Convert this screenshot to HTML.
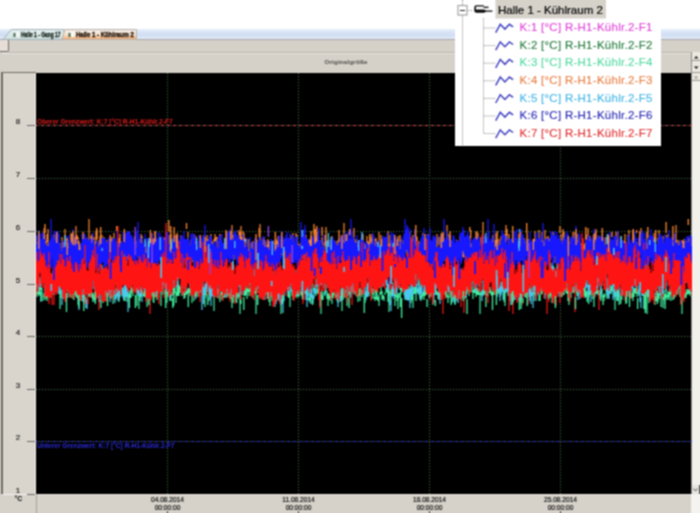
<!DOCTYPE html>
<html><head><meta charset="utf-8">
<style>
*{margin:0;padding:0;box-sizing:border-box}
html,body{width:700px;height:513px;overflow:hidden;background:#fff;font-family:"Liberation Sans",sans-serif}
.a{position:absolute}
#tabstrip{left:0;top:29px;width:700px;height:11px;background:linear-gradient(#e6eefa 0%,#d0def4 55%,#d6e2f4 80%,#e8eef8 100%);border-bottom:1px solid #a4a6aa}
#gray{left:0;top:40px;width:700px;height:473px;background:#d5d1c9}
#brk{left:0;top:40px;width:9px;height:12px;border-right:1px solid #6c6a66;border-bottom:1px solid #6c6a66;border-bottom-right-radius:2px;background:#e6ded6}
#hline{left:9px;top:52px;width:682px;height:1px;background:#b9b5ad}
#hline2{left:2px;top:53px;width:689px;height:1px;background:#e6e3dd}
#title{left:0;top:58px;width:692px;padding-left:0;text-align:center;font-size:6.2px;font-weight:bold;color:#5a5854;-webkit-text-stroke:0.1px currentColor;letter-spacing:0.2px}
#lborder{left:1px;top:72px;width:2px;height:422px;background:#6e6b66}
#ltop{left:1px;top:72px;width:35px;height:1px;background:#6e6b66}
#leftax{left:3px;top:73px;width:33px;height:421px;background:#d9d5cd}
#lhl{left:35px;top:73px;width:1px;height:421px;background:#f2f0ec}
#plot{left:36px;top:73px;width:656px;height:421px;background:#000}
#rscroll{left:691px;top:52px;width:9px;height:442px;background:#f1f0eb;border-left:1px solid #8e8c88}
.sb{position:absolute;left:692px;width:8px;background:#ebe8e0;border-bottom:1px solid #9c9a95}
#bottom{left:0;top:494px;width:700px;height:19px;background:#d6d2ca}
#bhl{left:3px;top:494px;width:33px;height:1px;background:#f4f2ee}
#bsep{left:36px;top:494px;width:1px;height:19px;background:#a4a19a}
#rbot{left:691px;top:494px;width:9px;height:19px;background:#f4f3ef}
.yl{position:absolute;left:13px;font-size:8px;color:#1a1a1a;-webkit-text-stroke:0.15px currentColor;width:10px;text-align:center;line-height:8px}
.tk{position:absolute;left:27px;width:8px;height:1px;background:#6a6a6a}
.xl{position:absolute;font-size:6.6px;color:#080808;-webkit-text-stroke:0.15px currentColor;width:60px;text-align:center;line-height:8px}
.xt{position:absolute;width:1px;height:2px;top:511px;background:#444}
#legend{left:455px;top:0;width:206px;height:146px;background:#fff}
.lt{position:absolute;left:64.5px;font-size:11.5px;letter-spacing:0.27px;white-space:nowrap;line-height:12px;-webkit-text-stroke:0.12px currentColor}
</style></head><body><svg width="0" height="0" style="position:absolute"><filter id="soft" x="0" y="0" width="100%" height="100%" color-interpolation-filters="sRGB"><feConvolveMatrix order="3" kernelMatrix="1 2 1 2 4 2 1 2 1" divisor="16" edgeMode="duplicate"/></filter></svg><div style="position:absolute;left:0;top:0;width:700px;height:513px;filter:url(#soft)">
<div class="a" id="tabstrip"></div>
<div class="a" id="gray"></div>
<div class="a" id="brk"></div>
<svg class="a" style="left:0;top:29px" width="140" height="12"><defs><linearGradient id="tg" x1="0" y1="0" x2="0" y2="1"><stop offset="0" stop-color="#f4f0ec"/><stop offset="0.5" stop-color="#f8e4d2"/><stop offset="1" stop-color="#f0a870"/></linearGradient><linearGradient id="tg1" x1="0" y1="0" x2="0" y2="1"><stop offset="0" stop-color="#e8f0f0"/><stop offset="1" stop-color="#cfe0dc"/></linearGradient></defs><path d="M3 10.5 L11.5 0.5 H64 V10.5 Z" fill="url(#tg1)" stroke="#9fb0b8" stroke-width="1"/><path d="M62 10.5 L65 0.5 H136.5 V10.5 Z" fill="url(#tg)" stroke="#b8b0a8" stroke-width="1"/><rect x="13.5" y="4" width="2" height="4" fill="#4a6a58"/><rect x="16" y="3" width="3" height="5" fill="#f4f8f6"/><rect x="68.5" y="4" width="2" height="4" fill="#3a6a48"/><rect x="71" y="3" width="3" height="5" fill="#f8faf8"/></svg>
<div class="a" style="left:21px;top:30.5px;font-size:7px;font-weight:bold;color:#0c1a14;white-space:nowrap;transform:scaleX(0.70);-webkit-text-stroke:0.3px currentColor;transform-origin:0 0">Halle 1 - Gang 17</div>
<div class="a" style="left:76px;top:30.5px;font-size:7px;font-weight:bold;color:#1a0c00;white-space:nowrap;transform:scaleX(0.86);-webkit-text-stroke:0.35px currentColor;transform-origin:0 0">Halle 1 - Kühlraum 2</div>
<div class="a" id="hline"></div>
<div class="a" id="hline2"></div>
<div class="a" id="title">Originalgröße</div>
<div class="a" id="lborder"></div>
<div class="a" id="leftax"></div>
<div class="a" id="ltop"></div>
<div class="a" id="lhl"></div>
<div class="a" id="plot"></div>
<div class="a" id="rscroll"></div>
<div class="sb" style="top:52px;height:9px"></div>
<div class="sb" style="top:61px;height:12px"></div>
<div class="sb" style="top:73px;height:8px"></div>
<svg class="a" style="left:692px;top:52px" width="8" height="30"><path d="M2 6.5h4.5l-2.25-2.5z" fill="#111"/><path d="M2 14.5h4.5l-2.25 2.5z" fill="#111"/><rect x="2.5" y="24" width="3" height="3" fill="#b8b4ac"/></svg>
<div class="a" id="bottom"></div>
<div class="a" id="bhl"></div>
<div class="a" style="left:36px;top:494px;width:655px;height:1px;background:#e6e3dd"></div>
<div class="a" id="bsep"></div>
<div class="a" id="rbot"></div>
<div class="a" style="left:699px;top:485px;width:1px;height:9px;background:#555"></div>
<div class="a" style="left:692px;top:485px;width:7px;height:9px;background:#e6e4de"></div>
<svg class="a" style="left:692px;top:485px" width="8" height="9"><path d="M1.5 3.5 L3.5 6 L5.5 3.5" fill="none" stroke="#555" stroke-width="1"/></svg>
<div class="tk" style="top:125px"></div>
<div class="yl" style="top:118px">8</div>
<div class="tk" style="top:178px"></div>
<div class="yl" style="top:171px">7</div>
<div class="tk" style="top:231px"></div>
<div class="yl" style="top:224px">6</div>
<div class="tk" style="top:284px"></div>
<div class="yl" style="top:277px">5</div>
<div class="tk" style="top:336px"></div>
<div class="yl" style="top:329px">4</div>
<div class="tk" style="top:389px"></div>
<div class="yl" style="top:382px">3</div>
<div class="tk" style="top:441px"></div>
<div class="yl" style="top:434px">2</div>
<div class="tk" style="top:494px"></div>
<div class="yl" style="top:487px">1</div>
<div class="a" style="left:14.5px;top:494.5px;font-size:6.8px;font-weight:bold;color:#000">°C</div>
<div class="xl" style="left:137.5px;top:495.5px">04.08.2014<br>00:00:00</div>
<div class="xt" style="left:167px"></div>
<div class="xl" style="left:268.5px;top:495.5px">11.08.2014<br>00:00:00</div>
<div class="xt" style="left:298px"></div>
<div class="xl" style="left:399.5px;top:495.5px">18.08.2014<br>00:00:00</div>
<div class="xt" style="left:429px"></div>
<div class="xl" style="left:530.5px;top:495.5px">25.08.2014<br>00:00:00</div>
<div class="xt" style="left:560px"></div>
<svg class="a" style="left:0;top:0" width="700" height="513" viewBox="0 0 700 513"><defs><clipPath id="c"><rect x="36" y="73" width="656" height="421"/></clipPath></defs><g clip-path="url(#c)" fill="none"><g>
<line x1="36" y1="125.5" x2="692" y2="125.5" stroke="#4a784a" stroke-dasharray="1 2"/>
<line x1="36" y1="178.5" x2="692" y2="178.5" stroke="#4a784a" stroke-dasharray="1 2"/>
<line x1="36" y1="231.5" x2="692" y2="231.5" stroke="#4a784a" stroke-dasharray="1 2"/>
<line x1="36" y1="284.5" x2="692" y2="284.5" stroke="#4a784a" stroke-dasharray="1 2"/>
<line x1="36" y1="336.5" x2="692" y2="336.5" stroke="#4a784a" stroke-dasharray="1 2"/>
<line x1="36" y1="389.5" x2="692" y2="389.5" stroke="#4a784a" stroke-dasharray="1 2"/>
<line x1="36" y1="441.5" x2="692" y2="441.5" stroke="#4a784a" stroke-dasharray="1 2"/>
<line x1="167.5" y1="73" x2="167.5" y2="494" stroke="#4a784a" stroke-dasharray="1 2"/>
<line x1="298.5" y1="73" x2="298.5" y2="494" stroke="#4a784a" stroke-dasharray="1 2"/>
<line x1="429.5" y1="73" x2="429.5" y2="494" stroke="#4a784a" stroke-dasharray="1 2"/>
<line x1="560.5" y1="73" x2="560.5" y2="494" stroke="#4a784a" stroke-dasharray="1 2"/>
<line x1="36" y1="125.5" x2="692" y2="125.5" stroke="#e04a5a" stroke-dasharray="3 3" stroke-dashoffset="1"/>
<line x1="36" y1="441.5" x2="692" y2="441.5" stroke="#3434d0" stroke-dasharray="3 3" stroke-dashoffset="1"/>
<text x="37" y="124" font-size="6.6" font-weight="bold" fill="#e01c1c" font-family="Liberation Sans">Oberer Grenzwert: K:7 [°C] R-H1-Kühlr.2-F7</text>
<text x="37" y="447.5" font-size="6.6" font-weight="bold" fill="#2a2ad8" font-family="Liberation Sans">Unterer Grenzwert: K:7 [°C] R-H1-Kühlr.2-F7</text>
<path stroke="#40f0a0" stroke-width="1.2" d="M36.0 285V295M37.0 292V297M38.0 270V294M39.0 285V296M40.0 281V295M41.0 287V290M42.0 288V296M43.0 296V301M44.0 293V297M45.0 286V300M46.0 290V298M47.0 291V301M48.0 292V298M49.0 288V292M50.0 289V296M51.0 291V298M52.0 284V295M53.0 286V292M54.0 282V290M55.0 283V290M56.0 281V287M57.0 284V292M58.0 285V291M59.0 290V294M60.0 289V309M61.0 290V298M62.0 283V287M63.0 286V299M64.0 287V292M65.0 288V297M66.0 287V290M67.0 284V291M68.0 284V292M69.0 284V292M70.0 292V297M71.0 285V298M72.0 288V295M73.0 291V299M74.0 293V300M75.0 291V295M76.0 289V297M77.0 289V298M78.0 286V305M79.0 286V295M80.0 294V297M81.0 289V294M82.0 290V301M83.0 293V297M84.0 287V295M85.0 296V303M86.0 297V302M87.0 291V295M88.0 289V297M89.0 290V296M90.0 292V297M91.0 292V298M92.0 292V297M93.0 293V299M94.0 295V300M95.0 287V302M96.0 292V297M97.0 289V293M98.0 291V295M99.0 285V295M100.0 288V293M101.0 281V292M102.0 265V300M103.0 291V303M104.0 286V298M105.0 289V296M106.0 290V301M107.0 283V289M108.0 285V292M109.0 287V291M110.0 285V298M111.0 294V298M112.0 288V298M113.0 286V304M114.0 280V296M115.0 294V300M116.0 288V299M117.0 289V295M118.0 290V297M119.0 286V302M120.0 287V297M121.0 287V289M122.0 288V295M123.0 288V296M124.0 291V301M125.0 292V301M126.0 294V297M127.0 291V302M128.0 291V297M129.0 294V298M130.0 290V298M131.0 283V298M132.0 287V293M133.0 289V296M134.0 285V291M135.0 282V286M136.0 285V291M137.0 264V306M138.0 289V293M139.0 293V309M140.0 292V301M141.0 287V297M142.0 289V294M143.0 292V296M144.0 291V297M145.0 289V297M146.0 291V298M147.0 293V307M148.0 285V297M149.0 290V294M150.0 290V296M151.0 290V295M152.0 288V297M153.0 287V292M154.0 291V296M155.0 293V297M156.0 292V297M157.0 291V300M158.0 286V293M159.0 274V292M160.0 284V289M161.0 286V306M162.0 285V289M163.0 288V295M164.0 276V287M165.0 290V294M166.0 285V293M167.0 290V303M168.0 291V297M169.0 287V293M170.0 288V301M171.0 294V301M172.0 292V296M173.0 285V295M174.0 288V295M175.0 285V293M176.0 292V303M177.0 285V296M178.0 281V296M179.0 285V296M180.0 286V293M181.0 287V290M182.0 292V296M183.0 292V295M184.0 291V299M185.0 292V298M186.0 290V295M187.0 290V294M188.0 288V295M189.0 288V293M190.0 279V296M191.0 289V294M192.0 287V303M193.0 282V292M194.0 293V301M195.0 280V296M196.0 285V297M197.0 288V293M198.0 289V297M199.0 287V294M200.0 289V292M201.0 283V293M202.0 285V289M203.0 290V296M204.0 288V295M205.0 290V307M206.0 285V295M207.0 294V298M208.0 288V292M209.0 289V301M210.0 274V295M211.0 285V292M212.0 291V295M213.0 289V294M214.0 290V311M215.0 289V295M216.0 287V295M217.0 288V298M218.0 289V294M219.0 288V299M220.0 274V302M221.0 291V295M222.0 292V300M223.0 290V298M224.0 293V298M225.0 290V297M226.0 286V292M227.0 289V297M228.0 286V296M229.0 292V297M230.0 287V299M231.0 292V299M232.0 292V308M233.0 295V303M234.0 291V297M235.0 296V302M236.0 289V294M237.0 293V298M238.0 292V297M239.0 292V299M240.0 299V314M241.0 297V304M242.0 291V295M243.0 247V290M244.0 291V296M245.0 288V296M246.0 285V295M247.0 288V299M248.0 287V292M249.0 282V296M250.0 288V292M251.0 275V295M252.0 290V294M253.0 290V298M254.0 286V293M255.0 282V294M256.0 288V314M257.0 287V293M258.0 285V289M259.0 290V293M260.0 291V297M261.0 289V297M262.0 288V292M263.0 282V300M264.0 288V292M265.0 286V291M266.0 290V294M267.0 287V292M268.0 289V296M269.0 290V302M270.0 294V306M271.0 288V297M272.0 293V301M273.0 291V294M274.0 286V299M275.0 288V292M276.0 277V292M277.0 292V301M278.0 287V298M279.0 291V298M280.0 270V302M281.0 294V314M282.0 292V296M283.0 285V293M284.0 287V290M285.0 283V288M286.0 281V284M287.0 280V288M288.0 291V297M289.0 291V298M290.0 290V307M291.0 287V291M292.0 290V296M293.0 290V300M294.0 286V296M295.0 289V297M296.0 291V296M297.0 291V298M298.0 290V296M299.0 293V297M300.0 289V294M301.0 292V295M302.0 286V296M303.0 287V300M304.0 288V293M305.0 288V294M306.0 289V294M307.0 287V295M308.0 292V300M309.0 298V301M310.0 290V301M311.0 291V304M312.0 295V298M313.0 284V289M314.0 288V292M315.0 288V294M316.0 292V296M317.0 289V293M318.0 276V294M319.0 288V294M320.0 294V306M321.0 292V314M322.0 290V299M323.0 295V300M324.0 292V295M325.0 290V294M326.0 284V292M327.0 291V299M328.0 293V306M329.0 294V299M330.0 295V301M331.0 293V298M332.0 293V304M333.0 292V298M334.0 291V295M335.0 294V297M336.0 283V298M337.0 294V301M338.0 289V303M339.0 292V297M340.0 290V297M341.0 290V298M342.0 292V311M343.0 292V300M344.0 291V297M345.0 287V298M346.0 290V293M347.0 293V306M348.0 284V296M349.0 291V294M350.0 290V298M351.0 288V292M352.0 286V292M353.0 285V292M354.0 288V293M355.0 291V295M356.0 283V293M357.0 292V297M358.0 294V302M359.0 289V296M360.0 288V301M361.0 288V295M362.0 290V297M363.0 289V294M364.0 290V295M365.0 294V303M366.0 293V297M367.0 287V296M368.0 289V294M369.0 292V296M370.0 287V291M371.0 286V290M372.0 288V299M373.0 289V294M374.0 280V299M375.0 297V301M376.0 270V299M377.0 292V300M378.0 297V301M379.0 295V306M380.0 292V295M381.0 284V294M382.0 291V300M383.0 295V299M384.0 296V301M385.0 292V295M386.0 288V292M387.0 288V293M388.0 290V302M389.0 290V312M390.0 291V295M391.0 291V302M392.0 289V294M393.0 290V295M394.0 288V295M395.0 291V306M396.0 286V297M397.0 295V301M398.0 293V309M399.0 293V298M400.0 286V290M401.0 288V294M402.0 283V292M403.0 281V288M404.0 285V295M405.0 293V300M406.0 290V294M407.0 284V292M408.0 286V290M409.0 286V294M410.0 290V295M411.0 294V303M412.0 294V300M413.0 292V308M414.0 286V294M415.0 287V294M416.0 287V301M417.0 289V292M418.0 288V294M419.0 278V293M420.0 291V298M421.0 295V301M422.0 293V299M423.0 292V296M424.0 290V300M425.0 289V296M426.0 289V295M427.0 281V294M428.0 273V290M429.0 284V298M430.0 290V297M431.0 290V297M432.0 288V294M433.0 291V305M434.0 285V293M435.0 288V292M436.0 286V295M437.0 291V295M438.0 292V299M439.0 288V300M440.0 292V296M441.0 286V293M442.0 284V292M443.0 288V295M444.0 287V294M445.0 283V292M446.0 288V298M447.0 294V297M448.0 296V303M449.0 293V298M450.0 279V293M451.0 285V296M452.0 297V303M453.0 292V297M454.0 295V300M455.0 285V303M456.0 289V295M457.0 289V293M458.0 284V290M459.0 290V296M460.0 287V293M461.0 289V300M462.0 292V298M463.0 289V294M464.0 282V293M465.0 289V299M466.0 285V298M467.0 286V294M468.0 287V291M469.0 286V296M470.0 286V292M471.0 282V289M472.0 287V292M473.0 290V299M474.0 287V293M475.0 288V293M476.0 288V297M477.0 288V295M478.0 288V295M479.0 289V295M480.0 293V314M481.0 291V295M482.0 291V296M483.0 289V296M484.0 285V294M485.0 291V295M486.0 289V296M487.0 293V297M488.0 290V296M489.0 287V293M490.0 287V293M491.0 290V295M492.0 292V296M493.0 288V295M494.0 292V295M495.0 284V292M496.0 291V295M497.0 289V292M498.0 284V291M499.0 286V292M500.0 290V297M501.0 288V293M502.0 285V290M503.0 277V292M504.0 276V299M505.0 286V306M506.0 286V293M507.0 286V291M508.0 283V296M509.0 286V295M510.0 290V297M511.0 286V292M512.0 284V288M513.0 281V289M514.0 288V295M515.0 289V297M516.0 293V297M517.0 292V296M518.0 287V298M519.0 290V296M520.0 297V303M521.0 290V297M522.0 285V291M523.0 288V291M524.0 279V295M525.0 289V297M526.0 291V298M527.0 286V294M528.0 287V291M529.0 285V293M530.0 289V297M531.0 284V289M532.0 266V293M533.0 269V293M534.0 292V301M535.0 291V295M536.0 284V296M537.0 286V290M538.0 286V290M539.0 289V301M540.0 295V301M541.0 289V295M542.0 288V294M543.0 282V289M544.0 284V292M545.0 288V295M546.0 289V294M547.0 289V293M548.0 287V291M549.0 289V293M550.0 289V296M551.0 292V298M552.0 294V303M553.0 291V296M554.0 289V293M555.0 293V296M556.0 287V291M557.0 285V294M558.0 289V294M559.0 287V293M560.0 290V295M561.0 288V297M562.0 289V297M563.0 282V295M564.0 282V295M565.0 288V291M566.0 287V293M567.0 271V294M568.0 288V301M569.0 289V305M570.0 287V294M571.0 284V298M572.0 288V292M573.0 286V293M574.0 290V293M575.0 285V291M576.0 286V293M577.0 285V296M578.0 290V296M579.0 284V293M580.0 286V294M581.0 287V291M582.0 286V294M583.0 286V291M584.0 287V296M585.0 287V298M586.0 290V297M587.0 292V302M588.0 291V294M589.0 285V297M590.0 291V295M591.0 282V294M592.0 290V295M593.0 274V299M594.0 290V307M595.0 291V297M596.0 288V294M597.0 278V294M598.0 290V295M599.0 290V296M600.0 291V299M601.0 287V301M602.0 289V294M603.0 295V298M604.0 295V301M605.0 293V297M606.0 288V292M607.0 288V299M608.0 288V296M609.0 280V290M610.0 289V294M611.0 286V294M612.0 284V291M613.0 287V292M614.0 291V297M615.0 287V310M616.0 290V296M617.0 295V301M618.0 298V301M619.0 295V305M620.0 292V296M621.0 288V291M622.0 288V300M623.0 274V295M624.0 292V295M625.0 293V296M626.0 295V299M627.0 284V296M628.0 280V292M629.0 289V296M630.0 292V297M631.0 286V298M632.0 293V298M633.0 290V301M634.0 288V297M635.0 288V293M636.0 288V294M637.0 285V297M638.0 289V293M639.0 292V296M640.0 288V291M641.0 285V292M642.0 286V295M643.0 287V290M644.0 279V290M645.0 284V291M646.0 291V296M647.0 289V314M648.0 288V297M649.0 282V303M650.0 296V299M651.0 283V289M652.0 287V298M653.0 288V297M654.0 293V296M655.0 296V305M656.0 287V301M657.0 296V301M658.0 293V302M659.0 293V299M660.0 290V294M661.0 291V307M662.0 294V299M663.0 297V308M664.0 290V300M665.0 294V297M666.0 289V298M667.0 295V300M668.0 291V297M669.0 292V298M670.0 289V295M671.0 292V301M672.0 290V293M673.0 294V300M674.0 295V299M675.0 291V297M676.0 287V294M677.0 290V295M678.0 288V293M679.0 286V290M680.0 290V297M681.0 289V304M682.0 291V314M683.0 292V297M684.0 280V299M685.0 290V298M686.0 292V298M687.0 289V295M688.0 289V294M689.0 290V294M690.0 287V296M691.0 288V294M692.0 292V298"/>
<path stroke="#48c8f0" stroke-width="1.2" d="M36.0 276V287M37.0 273V288M38.0 271V282M39.0 279V291M40.0 277V288M41.0 291V302M42.0 277V286M43.0 264V282M44.0 273V280M45.0 268V292M46.0 279V290M47.0 272V284M48.0 275V283M49.0 281V289M50.0 273V287M51.0 283V290M52.0 280V287M53.0 271V281M54.0 285V295M55.0 268V276M56.0 264V274M57.0 272V286M58.0 273V284M59.0 278V294M60.0 280V292M61.0 272V282M62.0 281V305M63.0 286V295M64.0 280V289M65.0 275V285M66.0 264V275M67.0 270V287M68.0 283V298M69.0 275V284M70.0 268V285M71.0 277V293M72.0 270V282M73.0 268V289M74.0 265V278M75.0 270V278M76.0 272V287M77.0 267V276M78.0 267V284M79.0 285V310M80.0 284V301M81.0 288V300M82.0 280V289M83.0 283V302M84.0 288V301M85.0 288V301M86.0 300V308M87.0 299V309M88.0 288V297M89.0 283V293M90.0 256V275M91.0 261V273M92.0 265V276M93.0 273V289M94.0 276V282M95.0 279V292M96.0 282V294M97.0 281V291M98.0 289V298M99.0 292V302M100.0 295V302M101.0 284V295M102.0 286V295M103.0 285V298M104.0 282V300M105.0 284V293M106.0 273V289M107.0 284V295M108.0 280V294M109.0 286V296M110.0 286V302M111.0 282V293M112.0 280V291M113.0 282V295M114.0 278V294M115.0 294V303M116.0 290V298M117.0 283V296M118.0 281V301M119.0 290V300M120.0 282V291M121.0 281V289M122.0 287V296M123.0 290V298M124.0 286V300M125.0 278V297M126.0 275V294M127.0 287V297M128.0 289V312M129.0 266V275M130.0 267V281M131.0 268V278M132.0 269V281M133.0 269V280M134.0 281V289M135.0 279V288M136.0 270V293M137.0 278V291M138.0 284V296M139.0 285V295M140.0 285V295M141.0 287V297M142.0 294V302M143.0 272V282M144.0 275V290M145.0 277V291M146.0 269V283M147.0 285V294M148.0 282V293M149.0 278V292M150.0 281V290M151.0 286V294M152.0 277V292M153.0 274V295M154.0 274V294M155.0 276V286M156.0 279V295M157.0 270V285M158.0 271V281M159.0 266V277M160.0 274V289M161.0 268V293M162.0 280V288M163.0 277V285M164.0 276V288M165.0 278V288M166.0 276V294M167.0 274V289M168.0 278V290M169.0 271V279M170.0 287V299M171.0 270V284M172.0 266V282M173.0 276V288M174.0 275V284M175.0 268V280M176.0 275V287M177.0 272V280M178.0 269V288M179.0 260V271M180.0 265V274M181.0 264V279M182.0 273V280M183.0 279V289M184.0 269V278M185.0 282V293M186.0 276V290M187.0 264V277M188.0 253V269M189.0 268V283M190.0 267V286M191.0 271V286M192.0 268V281M193.0 268V281M194.0 276V285M195.0 273V284M196.0 283V299M197.0 282V290M198.0 270V282M199.0 274V287M200.0 271V284M201.0 277V288M202.0 287V310M203.0 280V295M204.0 286V298M205.0 284V294M206.0 280V289M207.0 282V292M208.0 277V288M209.0 284V293M210.0 283V299M211.0 286V306M212.0 285V296M213.0 285V297M214.0 277V294M215.0 284V297M216.0 279V292M217.0 281V294M218.0 272V284M219.0 277V288M220.0 276V286M221.0 277V287M222.0 272V286M223.0 276V285M224.0 280V294M225.0 275V285M226.0 272V298M227.0 283V292M228.0 284V293M229.0 273V285M230.0 267V285M231.0 280V294M232.0 277V293M233.0 287V296M234.0 284V297M235.0 287V294M236.0 278V292M237.0 278V287M238.0 274V282M239.0 277V287M240.0 282V297M241.0 280V295M242.0 281V290M243.0 276V287M244.0 285V293M245.0 269V280M246.0 271V283M247.0 268V278M248.0 267V280M249.0 271V285M250.0 269V284M251.0 269V282M252.0 273V288M253.0 279V288M254.0 267V280M255.0 270V288M256.0 269V276M257.0 280V290M258.0 275V289M259.0 263V286M260.0 276V284M261.0 274V286M262.0 272V289M263.0 288V298M264.0 278V293M265.0 282V300M266.0 283V295M267.0 275V287M268.0 288V298M269.0 284V294M270.0 285V296M271.0 281V295M272.0 282V296M273.0 285V295M274.0 277V290M275.0 298V307M276.0 286V304M277.0 281V294M278.0 286V299M279.0 284V301M280.0 289V298M281.0 291V305M282.0 292V304M283.0 294V313M284.0 285V301M285.0 275V290M286.0 277V288M287.0 276V290M288.0 277V293M289.0 282V294M290.0 282V290M291.0 269V285M292.0 284V293M293.0 280V289M294.0 273V294M295.0 274V286M296.0 270V281M297.0 278V290M298.0 278V294M299.0 283V296M300.0 277V288M301.0 273V286M302.0 277V286M303.0 274V287M304.0 281V290M305.0 280V292M306.0 281V300M307.0 294V307M308.0 285V296M309.0 268V291M310.0 289V303M311.0 284V295M312.0 289V298M313.0 295V303M314.0 289V299M315.0 285V293M316.0 279V293M317.0 277V287M318.0 272V285M319.0 268V285M320.0 278V286M321.0 274V285M322.0 275V285M323.0 274V288M324.0 271V282M325.0 283V296M326.0 271V279M327.0 267V282M328.0 276V288M329.0 268V283M330.0 273V284M331.0 285V294M332.0 277V289M333.0 278V287M334.0 271V283M335.0 276V287M336.0 276V290M337.0 273V286M338.0 286V307M339.0 285V295M340.0 288V302M341.0 290V301M342.0 283V292M343.0 278V291M344.0 280V297M345.0 271V279M346.0 276V287M347.0 274V292M348.0 286V296M349.0 271V281M350.0 276V290M351.0 282V297M352.0 267V287M353.0 281V294M354.0 272V282M355.0 280V290M356.0 275V291M357.0 263V275M358.0 263V270M359.0 264V276M360.0 271V278M361.0 263V277M362.0 268V282M363.0 275V284M364.0 280V293M365.0 286V295M366.0 291V300M367.0 282V297M368.0 283V297M369.0 277V288M370.0 275V291M371.0 277V292M372.0 273V283M373.0 271V281M374.0 270V285M375.0 265V275M376.0 268V279M377.0 266V274M378.0 260V270M379.0 258V273M380.0 269V284M381.0 263V272M382.0 265V279M383.0 273V287M384.0 273V285M385.0 274V282M386.0 277V285M387.0 277V289M388.0 284V291M389.0 281V290M390.0 291V305M391.0 301V311M392.0 286V297M393.0 282V296M394.0 287V299M395.0 279V290M396.0 277V292M397.0 281V294M398.0 279V287M399.0 277V288M400.0 266V276M401.0 264V282M402.0 257V269M403.0 279V291M404.0 283V292M405.0 289V298M406.0 284V300M407.0 287V300M408.0 289V301M409.0 289V300M410.0 288V308M411.0 284V296M412.0 283V297M413.0 286V294M414.0 274V282M415.0 271V280M416.0 272V288M417.0 284V293M418.0 274V284M419.0 283V295M420.0 287V300M421.0 279V294M422.0 280V294M423.0 272V286M424.0 284V292M425.0 278V290M426.0 274V283M427.0 272V282M428.0 267V279M429.0 269V280M430.0 277V288M431.0 279V288M432.0 278V292M433.0 283V295M434.0 282V303M435.0 280V295M436.0 277V288M437.0 276V288M438.0 276V287M439.0 282V297M440.0 296V304M441.0 290V300M442.0 277V294M443.0 275V285M444.0 273V290M445.0 283V294M446.0 284V291M447.0 279V290M448.0 281V293M449.0 281V292M450.0 280V292M451.0 281V291M452.0 279V294M453.0 293V302M454.0 280V299M455.0 292V305M456.0 285V295M457.0 289V301M458.0 292V303M459.0 291V299M460.0 280V290M461.0 269V286M462.0 274V286M463.0 273V288M464.0 274V283M465.0 279V290M466.0 285V298M467.0 264V284M468.0 273V284M469.0 262V271M470.0 275V286M471.0 264V274M472.0 258V280M473.0 276V287M474.0 274V284M475.0 277V292M476.0 273V291M477.0 266V276M478.0 262V283M479.0 274V287M480.0 269V278M481.0 272V283M482.0 292V301M483.0 281V295M484.0 274V282M485.0 269V282M486.0 275V286M487.0 271V283M488.0 259V286M489.0 267V278M490.0 272V280M491.0 272V282M492.0 268V277M493.0 267V278M494.0 267V278M495.0 275V288M496.0 281V290M497.0 279V287M498.0 273V292M499.0 280V291M500.0 286V301M501.0 282V295M502.0 277V291M503.0 285V300M504.0 276V287M505.0 280V293M506.0 279V291M507.0 281V290M508.0 281V292M509.0 280V294M510.0 289V301M511.0 285V305M512.0 281V296M513.0 294V303M514.0 284V300M515.0 278V300M516.0 286V297M517.0 282V291M518.0 284V295M519.0 285V294M520.0 292V301M521.0 292V300M522.0 283V298M523.0 285V297M524.0 283V291M525.0 279V288M526.0 280V289M527.0 269V279M528.0 281V294M529.0 289V297M530.0 288V301M531.0 290V304M532.0 285V296M533.0 291V308M534.0 282V291M535.0 272V291M536.0 287V301M537.0 277V286M538.0 271V295M539.0 283V292M540.0 280V290M541.0 275V286M542.0 277V289M543.0 278V288M544.0 282V290M545.0 283V299M546.0 276V288M547.0 277V292M548.0 275V288M549.0 272V285M550.0 268V277M551.0 263V282M552.0 266V282M553.0 261V280M554.0 267V276M555.0 270V279M556.0 271V282M557.0 263V283M558.0 252V285M559.0 282V297M560.0 272V283M561.0 268V276M562.0 274V285M563.0 268V278M564.0 267V279M565.0 269V279M566.0 274V286M567.0 260V270M568.0 256V272M569.0 254V266M570.0 272V284M571.0 274V283M572.0 259V272M573.0 272V281M574.0 280V291M575.0 274V287M576.0 273V282M577.0 277V290M578.0 280V300M579.0 280V288M580.0 285V299M581.0 282V292M582.0 277V291M583.0 273V284M584.0 275V285M585.0 278V288M586.0 275V289M587.0 278V287M588.0 285V300M589.0 278V293M590.0 276V289M591.0 280V302M592.0 275V291M593.0 273V285M594.0 271V282M595.0 276V290M596.0 286V294M597.0 275V289M598.0 278V287M599.0 272V282M600.0 276V286M601.0 285V296M602.0 271V286M603.0 263V276M604.0 269V280M605.0 269V276M606.0 272V279M607.0 278V294M608.0 279V298M609.0 287V299M610.0 275V293M611.0 271V280M612.0 276V285M613.0 275V300M614.0 278V287M615.0 280V298M616.0 279V294M617.0 290V300M618.0 289V301M619.0 278V297M620.0 277V285M621.0 269V278M622.0 258V296M623.0 268V285M624.0 276V288M625.0 285V298M626.0 286V295M627.0 281V296M628.0 276V285M629.0 284V293M630.0 282V291M631.0 272V284M632.0 280V289M633.0 282V291M634.0 272V285M635.0 273V286M636.0 278V288M637.0 273V287M638.0 276V284M639.0 285V295M640.0 291V302M641.0 297V308M642.0 284V296M643.0 280V296M644.0 283V295M645.0 278V286M646.0 264V295M647.0 255V275M648.0 279V287M649.0 284V296M650.0 287V298M651.0 282V292M652.0 274V294M653.0 276V293M654.0 279V290M655.0 273V282M656.0 280V295M657.0 276V289M658.0 276V286M659.0 278V292M660.0 283V296M661.0 283V294M662.0 277V288M663.0 267V275M664.0 271V281M665.0 271V278M666.0 278V291M667.0 269V280M668.0 265V274M669.0 267V276M670.0 274V285M671.0 280V292M672.0 262V282M673.0 276V289M674.0 273V284M675.0 266V275M676.0 263V277M677.0 263V280M678.0 274V294M679.0 273V283M680.0 276V289M681.0 284V295M682.0 259V288M683.0 266V281M684.0 267V282M685.0 271V283M686.0 268V283M687.0 267V282M688.0 272V281M689.0 276V286M690.0 275V292M691.0 273V282M692.0 265V282"/>
<path stroke="#ff8830" stroke-width="1.2" d="M36.0 236V257M37.0 245V254M38.0 242V249M39.0 237V247M40.0 241V247M41.0 240V254M42.0 243V257M43.0 244V262M44.0 243V249M45.0 239V246M46.0 241V247M47.0 234V242M48.0 229V253M49.0 243V253M50.0 244V255M51.0 243V247M52.0 240V249M53.0 243V248M54.0 234V241M55.0 244V252M56.0 235V254M57.0 250V263M58.0 241V249M59.0 245V258M60.0 243V249M61.0 250V256M62.0 237V251M63.0 242V252M64.0 242V252M65.0 229V251M66.0 239V252M67.0 244V262M68.0 243V253M69.0 247V265M70.0 250V258M71.0 233V245M72.0 234V249M73.0 233V274M74.0 239V245M75.0 237V260M76.0 226V255M77.0 235V248M78.0 237V258M79.0 241V250M80.0 244V256M81.0 247V255M82.0 249V255M83.0 251V258M84.0 246V254M85.0 246V255M86.0 238V246M87.0 242V251M88.0 243V255M89.0 219V260M90.0 243V258M91.0 236V249M92.0 234V252M93.0 237V242M94.0 237V252M95.0 242V257M96.0 231V243M97.0 230V239M98.0 243V254M99.0 240V245M100.0 236V259M101.0 240V245M102.0 235V251M103.0 247V260M104.0 237V262M105.0 244V256M106.0 245V254M107.0 240V258M108.0 251V259M109.0 249V258M110.0 240V249M111.0 239V254M112.0 237V249M113.0 242V250M114.0 233V252M115.0 243V251M116.0 244V255M117.0 241V253M118.0 243V253M119.0 238V255M120.0 234V256M121.0 241V247M122.0 248V265M123.0 245V251M124.0 245V258M125.0 234V267M126.0 246V261M127.0 243V262M128.0 240V259M129.0 243V253M130.0 238V245M131.0 243V250M132.0 239V253M133.0 242V252M134.0 251V258M135.0 236V246M136.0 241V249M137.0 248V253M138.0 246V258M139.0 253V258M140.0 239V258M141.0 234V254M142.0 236V255M143.0 244V249M144.0 249V256M145.0 246V256M146.0 248V254M147.0 243V258M148.0 239V256M149.0 245V251M150.0 239V245M151.0 239V247M152.0 240V252M153.0 239V258M154.0 238V250M155.0 232V244M156.0 243V250M157.0 245V262M158.0 242V248M159.0 242V249M160.0 238V245M161.0 253V259M162.0 239V249M163.0 242V263M164.0 237V249M165.0 238V260M166.0 239V248M167.0 237V248M168.0 235V253M169.0 247V254M170.0 235V261M171.0 234V257M172.0 250V261M173.0 250V262M174.0 242V257M175.0 246V252M176.0 235V257M177.0 235V257M178.0 245V259M179.0 241V248M180.0 241V255M181.0 235V250M182.0 248V256M183.0 252V267M184.0 245V255M185.0 247V254M186.0 245V265M187.0 242V253M188.0 232V253M189.0 244V260M190.0 246V253M191.0 240V257M192.0 247V255M193.0 244V262M194.0 234V246M195.0 241V256M196.0 236V260M197.0 249V262M198.0 246V252M199.0 243V255M200.0 245V253M201.0 246V256M202.0 241V246M203.0 242V255M204.0 235V262M205.0 248V255M206.0 257V264M207.0 235V253M208.0 239V244M209.0 241V248M210.0 236V251M211.0 234V252M212.0 241V253M213.0 244V260M214.0 239V253M215.0 234V241M216.0 237V242M217.0 237V257M218.0 253V258M219.0 241V249M220.0 234V247M221.0 240V247M222.0 247V255M223.0 246V258M224.0 248V253M225.0 247V253M226.0 239V255M227.0 244V249M228.0 249V258M229.0 250V255M230.0 239V247M231.0 240V247M232.0 225V254M233.0 235V256M234.0 241V260M235.0 239V249M236.0 247V252M237.0 254V260M238.0 246V262M239.0 230V252M240.0 232V250M241.0 226V248M242.0 237V248M243.0 231V249M244.0 233V253M245.0 238V255M246.0 246V253M247.0 239V247M248.0 249V257M249.0 239V268M250.0 249V257M251.0 243V248M252.0 242V285M253.0 241V258M254.0 251V258M255.0 247V262M256.0 242V251M257.0 240V257M258.0 251V257M259.0 245V256M260.0 224V252M261.0 243V252M262.0 247V253M263.0 239V248M264.0 237V253M265.0 240V250M266.0 242V260M267.0 245V257M268.0 239V247M269.0 241V256M270.0 241V255M271.0 241V259M272.0 248V257M273.0 245V261M274.0 241V267M275.0 243V275M276.0 239V252M277.0 241V262M278.0 236V253M279.0 243V251M280.0 244V252M281.0 239V254M282.0 242V256M283.0 240V248M284.0 245V265M285.0 239V250M286.0 245V252M287.0 238V259M288.0 243V275M289.0 243V252M290.0 239V245M291.0 235V243M292.0 238V246M293.0 233V248M294.0 245V252M295.0 242V259M296.0 233V246M297.0 235V243M298.0 243V258M299.0 250V258M300.0 244V257M301.0 242V252M302.0 240V254M303.0 237V259M304.0 251V257M305.0 248V262M306.0 235V255M307.0 239V249M308.0 242V254M309.0 239V253M310.0 240V252M311.0 236V256M312.0 237V255M313.0 243V253M314.0 232V256M315.0 229V251M316.0 237V251M317.0 232V255M318.0 243V261M319.0 242V258M320.0 240V267M321.0 247V261M322.0 237V243M323.0 243V255M324.0 242V250M325.0 235V246M326.0 227V251M327.0 249V263M328.0 240V245M329.0 240V247M330.0 246V258M331.0 244V260M332.0 236V251M333.0 240V252M334.0 240V250M335.0 243V249M336.0 241V256M337.0 246V250M338.0 240V253M339.0 247V268M340.0 239V243M341.0 242V248M342.0 244V256M343.0 240V248M344.0 223V252M345.0 235V245M346.0 234V260M347.0 234V253M348.0 243V268M349.0 240V263M350.0 241V253M351.0 242V249M352.0 244V254M353.0 245V254M354.0 228V249M355.0 242V258M356.0 239V255M357.0 241V260M358.0 245V253M359.0 247V253M360.0 252V259M361.0 247V257M362.0 235V250M363.0 234V258M364.0 243V251M365.0 244V253M366.0 245V253M367.0 236V257M368.0 241V253M369.0 243V256M370.0 236V246M371.0 238V259M372.0 234V256M373.0 244V250M374.0 248V255M375.0 239V251M376.0 238V256M377.0 241V249M378.0 245V260M379.0 232V260M380.0 249V254M381.0 235V251M382.0 239V252M383.0 247V255M384.0 243V254M385.0 240V249M386.0 238V245M387.0 245V254M388.0 231V264M389.0 244V253M390.0 235V262M391.0 242V249M392.0 249V262M393.0 246V262M394.0 249V259M395.0 239V250M396.0 244V250M397.0 239V253M398.0 236V256M399.0 248V258M400.0 235V249M401.0 240V255M402.0 245V255M403.0 240V250M404.0 245V255M405.0 239V249M406.0 238V252M407.0 245V254M408.0 236V247M409.0 234V243M410.0 232V252M411.0 242V252M412.0 239V256M413.0 235V265M414.0 243V256M415.0 230V245M416.0 236V256M417.0 237V250M418.0 246V257M419.0 241V265M420.0 256V262M421.0 247V259M422.0 250V255M423.0 233V261M424.0 242V249M425.0 239V252M426.0 240V262M427.0 238V248M428.0 234V255M429.0 246V253M430.0 241V252M431.0 243V257M432.0 243V254M433.0 244V253M434.0 241V247M435.0 247V258M436.0 239V250M437.0 234V267M438.0 251V258M439.0 237V245M440.0 237V248M441.0 240V245M442.0 251V258M443.0 234V252M444.0 238V261M445.0 240V250M446.0 246V252M447.0 225V258M448.0 243V264M449.0 234V242M450.0 236V242M451.0 248V258M452.0 243V259M453.0 240V250M454.0 250V258M455.0 249V261M456.0 252V258M457.0 240V254M458.0 242V253M459.0 242V258M460.0 236V249M461.0 243V251M462.0 238V257M463.0 247V257M464.0 248V258M465.0 241V249M466.0 238V251M467.0 243V251M468.0 243V257M469.0 246V251M470.0 236V252M471.0 243V249M472.0 245V258M473.0 248V256M474.0 242V256M475.0 246V251M476.0 232V251M477.0 240V258M478.0 233V259M479.0 242V250M480.0 242V252M481.0 237V243M482.0 238V247M483.0 222V252M484.0 236V251M485.0 243V247M486.0 249V255M487.0 245V260M488.0 237V257M489.0 242V254M490.0 245V254M491.0 242V251M492.0 240V253M493.0 235V254M494.0 251V261M495.0 240V261M496.0 233V248M497.0 240V254M498.0 248V276M499.0 239V252M500.0 253V263M501.0 236V253M502.0 240V270M503.0 241V251M504.0 246V251M505.0 234V246M506.0 225V245M507.0 229V240M508.0 246V256M509.0 234V250M510.0 245V251M511.0 239V260M512.0 242V254M513.0 242V256M514.0 241V251M515.0 239V249M516.0 243V248M517.0 241V249M518.0 243V249M519.0 234V246M520.0 239V248M521.0 232V259M522.0 250V260M523.0 248V258M524.0 238V265M525.0 242V268M526.0 247V251M527.0 246V254M528.0 243V257M529.0 239V258M530.0 244V250M531.0 241V255M532.0 251V259M533.0 239V256M534.0 239V251M535.0 231V261M536.0 244V260M537.0 252V261M538.0 247V253M539.0 230V241M540.0 239V256M541.0 241V255M542.0 232V248M543.0 240V248M544.0 242V253M545.0 230V247M546.0 243V250M547.0 237V258M548.0 236V261M549.0 238V249M550.0 239V249M551.0 237V245M552.0 246V254M553.0 232V255M554.0 247V254M555.0 244V263M556.0 238V244M557.0 251V256M558.0 239V257M559.0 241V251M560.0 242V251M561.0 234V241M562.0 242V250M563.0 229V256M564.0 232V245M565.0 247V254M566.0 244V257M567.0 246V252M568.0 238V247M569.0 242V255M570.0 247V253M571.0 239V255M572.0 246V252M573.0 232V253M574.0 243V255M575.0 232V254M576.0 243V257M577.0 234V248M578.0 241V248M579.0 238V248M580.0 246V253M581.0 243V264M582.0 244V253M583.0 239V264M584.0 245V250M585.0 243V254M586.0 238V245M587.0 235V240M588.0 228V236M589.0 239V250M590.0 236V260M591.0 243V248M592.0 248V254M593.0 241V251M594.0 234V250M595.0 232V252M596.0 229V240M597.0 242V264M598.0 244V261M599.0 236V249M600.0 242V250M601.0 240V257M602.0 255V259M603.0 244V248M604.0 238V252M605.0 244V256M606.0 237V245M607.0 238V243M608.0 241V249M609.0 238V251M610.0 245V267M611.0 241V263M612.0 246V257M613.0 241V247M614.0 244V257M615.0 238V262M616.0 232V254M617.0 240V249M618.0 231V257M619.0 241V248M620.0 243V253M621.0 236V265M622.0 242V259M623.0 245V254M624.0 241V249M625.0 234V257M626.0 246V256M627.0 246V258M628.0 235V247M629.0 230V256M630.0 248V256M631.0 247V253M632.0 242V258M633.0 230V253M634.0 235V252M635.0 246V262M636.0 243V254M637.0 242V249M638.0 245V254M639.0 242V251M640.0 241V252M641.0 228V253M642.0 242V259M643.0 245V257M644.0 245V252M645.0 254V260M646.0 242V256M647.0 232V257M648.0 243V251M649.0 244V254M650.0 242V255M651.0 242V248M652.0 244V254M653.0 239V254M654.0 233V246M655.0 237V253M656.0 244V257M657.0 248V255M658.0 238V250M659.0 230V251M660.0 246V257M661.0 240V252M662.0 245V251M663.0 236V263M664.0 245V261M665.0 243V256M666.0 235V251M667.0 241V257M668.0 234V262M669.0 239V252M670.0 251V257M671.0 249V256M672.0 241V252M673.0 240V246M674.0 242V256M675.0 234V254M676.0 225V250M677.0 240V254M678.0 246V253M679.0 240V254M680.0 242V253M681.0 243V249M682.0 240V262M683.0 241V248M684.0 239V253M685.0 241V248M686.0 246V254M687.0 240V253M688.0 238V245M689.0 238V245M690.0 247V261M691.0 241V249M692.0 242V263"/>
<path stroke="#1818ff" stroke-width="1.2" d="M36.0 234V266M37.0 244V268M38.0 235V275M39.0 230V262M40.0 234V258M41.0 239V269M42.0 233V266M43.0 232V260M44.0 236V265M45.0 235V261M46.0 244V267M47.0 246V270M48.0 246V268M49.0 242V277M50.0 240V261M51.0 219V266M52.0 235V258M53.0 238V266M54.0 231V266M55.0 240V271M56.0 231V266M57.0 232V261M58.0 231V265M59.0 234V260M60.0 244V269M61.0 251V274M62.0 241V267M63.0 248V273M64.0 240V269M65.0 245V271M66.0 240V267M67.0 236V268M68.0 248V269M69.0 235V263M70.0 240V268M71.0 242V265M72.0 244V271M73.0 229V269M74.0 235V264M75.0 246V271M76.0 244V271M77.0 239V267M78.0 244V274M79.0 250V277M80.0 250V271M81.0 243V271M82.0 234V268M83.0 239V268M84.0 234V262M85.0 234V260M86.0 239V264M87.0 237V265M88.0 240V269M89.0 240V262M90.0 238V263M91.0 239V274M92.0 243V269M93.0 233V268M94.0 240V267M95.0 245V270M96.0 246V269M97.0 241V266M98.0 241V274M99.0 247V271M100.0 240V269M101.0 237V271M102.0 238V263M103.0 238V262M104.0 238V269M105.0 238V267M106.0 242V267M107.0 242V264M108.0 239V278M109.0 237V265M110.0 239V265M111.0 240V259M112.0 242V261M113.0 238V262M114.0 239V265M115.0 238V263M116.0 243V272M117.0 231V274M118.0 243V265M119.0 247V269M120.0 243V274M121.0 241V267M122.0 244V268M123.0 232V272M124.0 235V254M125.0 235V261M126.0 233V262M127.0 232V263M128.0 231V256M129.0 231V260M130.0 232V258M131.0 236V268M132.0 235V264M133.0 238V259M134.0 241V276M135.0 244V282M136.0 248V271M137.0 231V256M138.0 222V265M139.0 240V272M140.0 235V278M141.0 243V266M142.0 238V273M143.0 244V278M144.0 241V271M145.0 234V265M146.0 253V276M147.0 238V267M148.0 238V268M149.0 245V276M150.0 244V271M151.0 243V268M152.0 241V266M153.0 245V264M154.0 244V268M155.0 235V266M156.0 237V261M157.0 239V262M158.0 232V268M159.0 239V261M160.0 233V260M161.0 238V264M162.0 236V270M163.0 239V278M164.0 237V270M165.0 240V262M166.0 231V265M167.0 232V268M168.0 233V265M169.0 244V271M170.0 251V272M171.0 253V275M172.0 242V267M173.0 237V261M174.0 236V261M175.0 238V267M176.0 243V266M177.0 244V275M178.0 235V265M179.0 241V266M180.0 239V273M181.0 235V269M182.0 239V266M183.0 236V271M184.0 231V261M185.0 239V263M186.0 239V265M187.0 240V262M188.0 237V271M189.0 240V274M190.0 245V269M191.0 234V265M192.0 233V260M193.0 238V260M194.0 234V264M195.0 235V265M196.0 244V283M197.0 248V273M198.0 241V269M199.0 235V267M200.0 235V265M201.0 241V265M202.0 238V263M203.0 236V261M204.0 236V259M205.0 225V256M206.0 241V265M207.0 241V264M208.0 241V262M209.0 238V268M210.0 235V261M211.0 236V265M212.0 244V273M213.0 244V273M214.0 242V271M215.0 241V266M216.0 246V267M217.0 239V267M218.0 248V269M219.0 235V269M220.0 236V293M221.0 240V264M222.0 234V264M223.0 243V268M224.0 243V275M225.0 240V263M226.0 238V259M227.0 233V264M228.0 232V258M229.0 232V262M230.0 229V264M231.0 234V259M232.0 238V260M233.0 240V268M234.0 232V255M235.0 233V259M236.0 230V259M237.0 235V266M238.0 238V263M239.0 235V263M240.0 239V261M241.0 240V272M242.0 240V268M243.0 234V270M244.0 241V271M245.0 247V272M246.0 244V277M247.0 238V270M248.0 249V272M249.0 251V275M250.0 237V270M251.0 248V274M252.0 242V267M253.0 249V269M254.0 242V267M255.0 238V268M256.0 238V261M257.0 241V275M258.0 243V268M259.0 237V269M260.0 240V270M261.0 241V265M262.0 237V266M263.0 245V275M264.0 236V276M265.0 247V275M266.0 240V275M267.0 247V269M268.0 248V272M269.0 250V271M270.0 241V266M271.0 239V269M272.0 241V264M273.0 240V270M274.0 244V269M275.0 251V271M276.0 249V280M277.0 244V265M278.0 247V272M279.0 236V263M280.0 235V262M281.0 239V259M282.0 231V253M283.0 237V265M284.0 241V265M285.0 238V267M286.0 235V264M287.0 232V258M288.0 238V263M289.0 238V260M290.0 233V268M291.0 239V270M292.0 235V262M293.0 235V263M294.0 242V263M295.0 238V263M296.0 236V260M297.0 237V268M298.0 245V263M299.0 245V265M300.0 247V271M301.0 222V272M302.0 237V267M303.0 233V256M304.0 229V257M305.0 225V254M306.0 237V259M307.0 239V269M308.0 239V264M309.0 243V290M310.0 246V276M311.0 245V264M312.0 237V270M313.0 237V270M314.0 235V271M315.0 242V266M316.0 241V265M317.0 232V274M318.0 236V261M319.0 228V262M320.0 240V267M321.0 240V276M322.0 248V273M323.0 245V273M324.0 235V270M325.0 251V269M326.0 249V273M327.0 249V277M328.0 241V268M329.0 246V279M330.0 240V275M331.0 248V271M332.0 240V270M333.0 237V266M334.0 240V261M335.0 241V265M336.0 243V265M337.0 245V268M338.0 245V273M339.0 240V275M340.0 238V267M341.0 236V260M342.0 237V266M343.0 235V267M344.0 243V270M345.0 233V270M346.0 241V264M347.0 241V263M348.0 231V269M349.0 231V260M350.0 239V266M351.0 219V267M352.0 231V260M353.0 239V276M354.0 237V267M355.0 242V267M356.0 243V268M357.0 235V266M358.0 247V272M359.0 246V275M360.0 240V272M361.0 238V267M362.0 233V260M363.0 240V264M364.0 242V268M365.0 249V270M366.0 241V268M367.0 243V266M368.0 244V265M369.0 251V276M370.0 238V274M371.0 242V268M372.0 244V267M373.0 233V265M374.0 236V262M375.0 246V277M376.0 241V273M377.0 244V266M378.0 244V268M379.0 240V270M380.0 245V270M381.0 246V270M382.0 247V273M383.0 236V266M384.0 237V269M385.0 237V261M386.0 237V264M387.0 233V270M388.0 246V277M389.0 247V284M390.0 247V273M391.0 232V269M392.0 240V263M393.0 233V266M394.0 234V270M395.0 237V263M396.0 237V265M397.0 246V266M398.0 246V272M399.0 241V268M400.0 249V271M401.0 241V275M402.0 237V275M403.0 244V271M404.0 234V272M405.0 219V260M406.0 230V252M407.0 225V250M408.0 227V264M409.0 234V262M410.0 229V264M411.0 241V265M412.0 239V267M413.0 242V266M414.0 236V259M415.0 229V273M416.0 246V271M417.0 241V264M418.0 247V275M419.0 245V271M420.0 242V265M421.0 238V261M422.0 235V262M423.0 235V265M424.0 228V262M425.0 240V263M426.0 240V264M427.0 234V275M428.0 236V272M429.0 235V261M430.0 228V273M431.0 240V266M432.0 241V272M433.0 236V265M434.0 235V268M435.0 237V265M436.0 237V263M437.0 247V272M438.0 247V279M439.0 247V277M440.0 235V278M441.0 242V266M442.0 236V273M443.0 241V270M444.0 219V260M445.0 239V261M446.0 239V266M447.0 231V276M448.0 236V259M449.0 240V262M450.0 237V267M451.0 240V263M452.0 240V264M453.0 235V258M454.0 236V263M455.0 243V269M456.0 239V262M457.0 241V262M458.0 241V269M459.0 241V262M460.0 233V258M461.0 233V264M462.0 232V261M463.0 227V251M464.0 230V254M465.0 237V261M466.0 236V267M467.0 234V269M468.0 231V261M469.0 236V258M470.0 240V269M471.0 247V273M472.0 239V268M473.0 240V268M474.0 237V267M475.0 238V265M476.0 240V262M477.0 234V259M478.0 237V260M479.0 237V265M480.0 241V267M481.0 246V268M482.0 238V266M483.0 244V268M484.0 235V265M485.0 238V261M486.0 238V266M487.0 238V270M488.0 219V271M489.0 232V265M490.0 241V265M491.0 239V268M492.0 237V265M493.0 242V267M494.0 224V267M495.0 248V280M496.0 246V271M497.0 243V275M498.0 241V276M499.0 245V282M500.0 245V267M501.0 240V264M502.0 230V264M503.0 233V262M504.0 235V266M505.0 235V270M506.0 242V269M507.0 236V260M508.0 245V272M509.0 239V271M510.0 238V273M511.0 239V268M512.0 239V267M513.0 243V263M514.0 232V270M515.0 231V268M516.0 238V260M517.0 229V264M518.0 241V268M519.0 238V266M520.0 246V267M521.0 229V261M522.0 235V259M523.0 234V264M524.0 239V267M525.0 243V266M526.0 239V270M527.0 239V256M528.0 243V273M529.0 240V283M530.0 232V265M531.0 241V270M532.0 241V262M533.0 239V265M534.0 242V263M535.0 241V271M536.0 233V271M537.0 239V261M538.0 232V263M539.0 238V273M540.0 239V269M541.0 235V269M542.0 242V267M543.0 223V266M544.0 246V278M545.0 239V268M546.0 240V264M547.0 238V266M548.0 238V264M549.0 241V266M550.0 238V263M551.0 232V260M552.0 231V258M553.0 235V265M554.0 235V263M555.0 231V256M556.0 236V263M557.0 232V264M558.0 239V266M559.0 235V263M560.0 238V269M561.0 241V266M562.0 243V266M563.0 240V265M564.0 237V269M565.0 234V271M566.0 239V264M567.0 231V265M568.0 234V260M569.0 237V269M570.0 244V274M571.0 237V267M572.0 236V264M573.0 239V276M574.0 238V263M575.0 235V263M576.0 226V255M577.0 238V263M578.0 242V263M579.0 233V274M580.0 235V264M581.0 245V270M582.0 250V272M583.0 252V276M584.0 249V278M585.0 251V278M586.0 240V265M587.0 239V268M588.0 236V260M589.0 235V276M590.0 241V271M591.0 238V271M592.0 239V265M593.0 236V273M594.0 229V262M595.0 243V267M596.0 240V277M597.0 238V266M598.0 235V265M599.0 238V262M600.0 236V263M601.0 237V270M602.0 234V271M603.0 239V263M604.0 237V262M605.0 244V270M606.0 246V270M607.0 239V268M608.0 241V268M609.0 233V263M610.0 242V269M611.0 232V269M612.0 239V261M613.0 240V265M614.0 236V264M615.0 236V264M616.0 236V264M617.0 246V272M618.0 231V266M619.0 241V267M620.0 238V265M621.0 243V267M622.0 240V268M623.0 240V263M624.0 243V275M625.0 243V264M626.0 246V272M627.0 242V268M628.0 236V280M629.0 234V277M630.0 244V270M631.0 241V271M632.0 239V272M633.0 241V260M634.0 241V269M635.0 231V263M636.0 238V265M637.0 244V270M638.0 238V259M639.0 236V266M640.0 234V255M641.0 231V262M642.0 234V270M643.0 231V260M644.0 239V263M645.0 233V260M646.0 241V264M647.0 249V271M648.0 235V265M649.0 239V265M650.0 235V262M651.0 229V258M652.0 236V263M653.0 236V265M654.0 242V265M655.0 242V272M656.0 244V266M657.0 244V273M658.0 239V264M659.0 234V267M660.0 237V261M661.0 234V258M662.0 236V263M663.0 239V268M664.0 243V269M665.0 234V258M666.0 237V267M667.0 238V266M668.0 237V266M669.0 230V259M670.0 238V265M671.0 239V267M672.0 236V266M673.0 246V275M674.0 238V261M675.0 233V264M676.0 243V269M677.0 242V270M678.0 245V273M679.0 245V272M680.0 240V272M681.0 241V267M682.0 243V267M683.0 248V278M684.0 248V275M685.0 238V269M686.0 243V265M687.0 236V261M688.0 236V265M689.0 242V264M690.0 235V268M691.0 236V270M692.0 246V271"/>
<path stroke="#ff1414" stroke-width="1.2" d="M36.0 259V295M37.0 252V284M38.0 262V292M39.0 260V287M40.0 250V273M41.0 253V284M42.0 257V287M43.0 255V288M44.0 253V283M45.0 260V297M46.0 267V297M47.0 265V296M48.0 269V298M49.0 252V304M50.0 265V297M51.0 274V297M52.0 273V305M53.0 267V293M54.0 266V305M55.0 265V292M56.0 265V295M57.0 264V294M58.0 260V291M59.0 261V286M60.0 254V287M61.0 264V288M62.0 254V290M63.0 259V297M64.0 260V299M65.0 267V302M66.0 266V301M67.0 257V290M68.0 261V298M69.0 261V292M70.0 256V294M71.0 263V298M72.0 269V296M73.0 265V294M74.0 267V299M75.0 262V291M76.0 262V291M77.0 264V294M78.0 270V296M79.0 272V298M80.0 264V301M81.0 269V300M82.0 260V295M83.0 258V289M84.0 264V295M85.0 245V304M86.0 262V293M87.0 270V295M88.0 271V304M89.0 263V294M90.0 262V293M91.0 259V298M92.0 255V293M93.0 250V281M94.0 257V287M95.0 246V298M96.0 273V300M97.0 254V298M98.0 268V296M99.0 274V310M100.0 264V294M101.0 264V295M102.0 271V301M103.0 268V302M104.0 268V301M105.0 268V302M106.0 266V291M107.0 268V302M108.0 270V297M109.0 259V290M110.0 250V297M111.0 262V290M112.0 262V300M113.0 260V296M114.0 263V290M115.0 256V295M116.0 260V285M117.0 256V293M118.0 226V289M119.0 256V291M120.0 265V290M121.0 267V295M122.0 251V288M123.0 257V285M124.0 257V286M125.0 257V285M126.0 256V285M127.0 261V288M128.0 266V292M129.0 254V288M130.0 257V291M131.0 256V288M132.0 259V285M133.0 261V293M134.0 261V290M135.0 265V292M136.0 260V294M137.0 261V288M138.0 264V290M139.0 259V290M140.0 256V293M141.0 260V286M142.0 263V290M143.0 262V294M144.0 254V288M145.0 260V289M146.0 258V302M147.0 267V298M148.0 255V298M149.0 262V301M150.0 263V314M151.0 268V300M152.0 261V293M153.0 263V297M154.0 264V293M155.0 263V298M156.0 263V291M157.0 266V291M158.0 262V298M159.0 265V304M160.0 264V293M161.0 262V292M162.0 254V291M163.0 257V282M164.0 252V298M165.0 257V288M166.0 223V283M167.0 264V292M168.0 258V289M169.0 263V297M170.0 260V295M171.0 259V291M172.0 264V295M173.0 263V288M174.0 252V280M175.0 259V288M176.0 258V286M177.0 250V281M178.0 246V277M179.0 241V279M180.0 252V279M181.0 263V292M182.0 254V294M183.0 268V296M184.0 258V287M185.0 268V293M186.0 258V291M187.0 253V287M188.0 257V283M189.0 257V284M190.0 262V289M191.0 257V296M192.0 266V295M193.0 266V295M194.0 262V298M195.0 268V294M196.0 266V291M197.0 261V294M198.0 262V291M199.0 269V297M200.0 265V302M201.0 259V290M202.0 260V296M203.0 242V282M204.0 251V288M205.0 246V281M206.0 258V284M207.0 246V282M208.0 255V295M209.0 255V287M210.0 258V285M211.0 252V289M212.0 259V288M213.0 264V295M214.0 267V298M215.0 260V296M216.0 266V296M217.0 268V298M218.0 260V285M219.0 269V295M220.0 265V299M221.0 252V291M222.0 260V291M223.0 267V301M224.0 266V296M225.0 262V293M226.0 259V294M227.0 259V289M228.0 268V298M229.0 265V293M230.0 269V302M231.0 262V289M232.0 263V298M233.0 263V295M234.0 265V295M235.0 274V304M236.0 267V297M237.0 265V298M238.0 266V294M239.0 256V286M240.0 258V285M241.0 253V300M242.0 257V290M243.0 255V294M244.0 261V291M245.0 268V290M246.0 257V286M247.0 260V287M248.0 258V289M249.0 258V289M250.0 252V283M251.0 265V297M252.0 269V296M253.0 264V295M254.0 276V300M255.0 263V291M256.0 261V287M257.0 263V294M258.0 259V286M259.0 260V297M260.0 266V299M261.0 260V299M262.0 262V297M263.0 271V300M264.0 268V300M265.0 261V296M266.0 255V293M267.0 264V299M268.0 262V297M269.0 267V300M270.0 266V297M271.0 267V292M272.0 263V296M273.0 271V307M274.0 265V306M275.0 275V304M276.0 270V299M277.0 263V301M278.0 268V294M279.0 267V293M280.0 262V304M281.0 266V295M282.0 270V299M283.0 265V296M284.0 254V292M285.0 251V292M286.0 258V296M287.0 259V290M288.0 256V287M289.0 260V291M290.0 253V286M291.0 254V284M292.0 257V289M293.0 267V298M294.0 265V301M295.0 269V298M296.0 273V295M297.0 268V290M298.0 262V294M299.0 265V291M300.0 259V295M301.0 261V287M302.0 255V286M303.0 260V304M304.0 254V300M305.0 255V291M306.0 261V290M307.0 252V288M308.0 257V286M309.0 258V290M310.0 256V293M311.0 258V285M312.0 251V288M313.0 252V284M314.0 254V279M315.0 249V288M316.0 248V277M317.0 254V285M318.0 258V284M319.0 270V300M320.0 262V308M321.0 257V283M322.0 262V291M323.0 255V291M324.0 250V284M325.0 251V291M326.0 253V283M327.0 261V287M328.0 261V288M329.0 263V291M330.0 263V296M331.0 265V300M332.0 253V292M333.0 264V293M334.0 251V290M335.0 258V299M336.0 264V293M337.0 269V299M338.0 256V292M339.0 263V301M340.0 263V296M341.0 263V287M342.0 256V288M343.0 251V289M344.0 259V297M345.0 262V289M346.0 261V298M347.0 260V286M348.0 260V303M349.0 256V288M350.0 260V292M351.0 262V286M352.0 261V305M353.0 260V283M354.0 256V293M355.0 258V291M356.0 264V296M357.0 265V293M358.0 256V297M359.0 256V289M360.0 252V282M361.0 260V296M362.0 242V288M363.0 261V294M364.0 260V294M365.0 262V287M366.0 259V287M367.0 250V284M368.0 248V278M369.0 254V291M370.0 266V293M371.0 260V301M372.0 260V286M373.0 261V293M374.0 256V289M375.0 259V293M376.0 260V291M377.0 260V292M378.0 258V292M379.0 255V288M380.0 257V288M381.0 252V286M382.0 258V287M383.0 260V283M384.0 251V287M385.0 256V289M386.0 254V280M387.0 251V280M388.0 249V277M389.0 245V277M390.0 256V289M391.0 253V294M392.0 253V278M393.0 246V281M394.0 261V289M395.0 256V294M396.0 251V278M397.0 258V288M398.0 263V286M399.0 255V289M400.0 257V284M401.0 258V288M402.0 261V288M403.0 260V292M404.0 257V292M405.0 258V289M406.0 259V290M407.0 254V289M408.0 253V289M409.0 258V285M410.0 258V286M411.0 237V285M412.0 241V283M413.0 258V287M414.0 255V286M415.0 249V287M416.0 251V274M417.0 241V284M418.0 247V280M419.0 252V278M420.0 251V281M421.0 253V285M422.0 255V285M423.0 255V288M424.0 255V286M425.0 256V285M426.0 262V292M427.0 239V294M428.0 262V295M429.0 263V294M430.0 267V300M431.0 264V293M432.0 264V297M433.0 270V304M434.0 261V293M435.0 257V283M436.0 252V285M437.0 252V289M438.0 261V288M439.0 266V293M440.0 268V292M441.0 266V300M442.0 268V298M443.0 264V314M444.0 264V295M445.0 267V299M446.0 259V292M447.0 256V294M448.0 258V285M449.0 262V287M450.0 269V294M451.0 265V297M452.0 261V297M453.0 266V290M454.0 260V297M455.0 257V299M456.0 265V298M457.0 264V298M458.0 261V300M459.0 264V290M460.0 271V299M461.0 270V307M462.0 268V297M463.0 270V297M464.0 267V313M465.0 260V296M466.0 256V291M467.0 262V287M468.0 259V290M469.0 258V294M470.0 257V290M471.0 258V293M472.0 254V282M473.0 253V281M474.0 256V287M475.0 252V289M476.0 252V284M477.0 252V284M478.0 260V291M479.0 257V284M480.0 250V292M481.0 258V291M482.0 234V279M483.0 255V281M484.0 264V290M485.0 252V291M486.0 260V297M487.0 260V289M488.0 256V303M489.0 264V292M490.0 252V283M491.0 250V282M492.0 259V291M493.0 258V288M494.0 250V291M495.0 266V295M496.0 256V294M497.0 263V292M498.0 255V289M499.0 256V288M500.0 255V284M501.0 253V279M502.0 248V282M503.0 259V287M504.0 253V290M505.0 250V288M506.0 262V289M507.0 256V288M508.0 264V288M509.0 259V311M510.0 268V294M511.0 264V301M512.0 252V291M513.0 262V314M514.0 265V295M515.0 274V298M516.0 269V296M517.0 272V303M518.0 265V301M519.0 262V297M520.0 263V293M521.0 265V294M522.0 273V305M523.0 264V297M524.0 264V293M525.0 261V295M526.0 260V293M527.0 261V292M528.0 258V304M529.0 253V289M530.0 250V284M531.0 262V288M532.0 261V292M533.0 258V287M534.0 255V285M535.0 251V286M536.0 260V299M537.0 263V295M538.0 260V291M539.0 257V293M540.0 267V294M541.0 256V288M542.0 261V291M543.0 258V291M544.0 268V298M545.0 261V293M546.0 262V294M547.0 270V314M548.0 270V297M549.0 250V302M550.0 254V292M551.0 267V293M552.0 269V298M553.0 271V302M554.0 269V304M555.0 268V298M556.0 277V306M557.0 269V297M558.0 263V294M559.0 264V292M560.0 270V303M561.0 259V292M562.0 257V296M563.0 258V293M564.0 262V291M565.0 257V289M566.0 260V291M567.0 255V283M568.0 254V291M569.0 268V298M570.0 270V302M571.0 265V292M572.0 255V292M573.0 262V285M574.0 261V287M575.0 257V312M576.0 257V282M577.0 261V292M578.0 257V289M579.0 259V293M580.0 262V290M581.0 271V298M582.0 233V297M583.0 238V298M584.0 258V288M585.0 259V286M586.0 257V283M587.0 253V280M588.0 250V281M589.0 250V285M590.0 254V284M591.0 258V290M592.0 250V295M593.0 256V293M594.0 265V297M595.0 259V292M596.0 263V291M597.0 253V286M598.0 252V277M599.0 258V310M600.0 253V283M601.0 257V286M602.0 255V286M603.0 254V281M604.0 257V290M605.0 254V290M606.0 261V290M607.0 248V274M608.0 254V288M609.0 248V291M610.0 251V285M611.0 254V285M612.0 254V285M613.0 256V284M614.0 259V284M615.0 252V289M616.0 257V292M617.0 252V289M618.0 258V290M619.0 251V287M620.0 259V285M621.0 263V296M622.0 258V290M623.0 256V296M624.0 255V295M625.0 263V301M626.0 242V298M627.0 265V295M628.0 262V297M629.0 257V291M630.0 256V290M631.0 262V299M632.0 263V286M633.0 257V286M634.0 248V287M635.0 245V279M636.0 255V286M637.0 259V292M638.0 250V286M639.0 252V284M640.0 258V285M641.0 259V292M642.0 260V294M643.0 269V293M644.0 243V296M645.0 260V300M646.0 269V297M647.0 265V290M648.0 256V289M649.0 266V290M650.0 269V302M651.0 273V301M652.0 261V298M653.0 271V300M654.0 263V304M655.0 259V289M656.0 253V293M657.0 260V299M658.0 255V286M659.0 257V286M660.0 255V293M661.0 258V286M662.0 262V299M663.0 261V295M664.0 255V289M665.0 256V289M666.0 250V282M667.0 253V280M668.0 256V286M669.0 263V292M670.0 260V285M671.0 260V291M672.0 260V296M673.0 268V298M674.0 253V295M675.0 260V293M676.0 260V297M677.0 261V290M678.0 260V295M679.0 260V287M680.0 261V285M681.0 262V305M682.0 266V297M683.0 266V300M684.0 273V302M685.0 256V294M686.0 258V282M687.0 258V283M688.0 253V288M689.0 253V290M690.0 255V289M691.0 261V292M692.0 264V296"/>
<path stroke="#ff8830" stroke-width="1.3" d="M259.2 228v9M608.6 235v17M311.2 231v15M339.0 230v12M441.4 233v15M602.3 228v13M150.4 230v10M476.9 231v8M314.9 229v15M647.8 227v11M533.4 239v11M281.8 232v16M394.8 235v19M170.7 226v11M67.2 238v17M527.1 233v9M450.1 231v16M100.7 227v17M639.7 231v15M443.1 232v10M369.7 234v10M168.8 220v12M470.7 230v8M576.1 229v16M415.8 225v12M672.9 226v14M612.0 232v5M124.4 229v13M636.7 230v3M200.4 235v13M38.9 231v18M314.0 224v8M226.0 230v15M316.7 226v16M174.1 227v15M44.3 228v11M186.5 223v6M73.1 231v14M585.7 227v12M512.7 226v16M205.1 237v15M469.8 227v4M256.0 234v26M519.7 231v8M96.6 228v12M177.1 233v16M349.7 229v6M560.0 226v7M116.7 226v5M83.1 232v7M655.7 230v12M341.9 235v14M688.3 219v6M155.3 231v11M275.3 232v10M425.0 234v16M497.2 231v19M110.2 235v17M568.3 236v20M56.7 232v11M633.3 229v14M45.0 224v9M226.3 231v18M176.5 235v12M322.1 227v9M230.7 231v9M527.2 236v15M593.8 234v16M666.1 222v11M526.7 223v10"/>
<path stroke="#1818ff" stroke-width="1.8" d="M87.4 257v10M202.3 251v12M199.4 251v3M671.1 260v14M641.5 257v12M157.1 254v10M566.6 252v17M195.1 253v15M475.1 261v13M208.9 246v17M622.4 246v15M247.4 252v7M351.1 256v14M53.9 266v14M291.6 248v16M508.2 251v27M636.2 257v12M632.0 241v19M524.1 262v7M314.7 268v8M460.9 250v13M395.2 264v3M542.7 259v19M565.1 256v25M320.9 267v7M251.7 256v8M643.9 250v16M361.1 252v15M311.2 251v5M55.2 251v16M106.2 259v5M73.9 262v10M459.4 263v16M541.6 261v17M505.2 263v15M453.0 254v21M188.2 260v10M434.9 261v17M51.3 254v14M681.4 263v22M121.1 256v16M406.9 257v11M382.5 258v13M110.7 262v17M311.6 252v19"/>
<path stroke="#48c8f0" stroke-width="1.6" d="M284.1 259v10M666.0 257v15M203.5 287v17M232.8 261v9M344.1 267v5M271.7 281v5M496.9 276v21M640.2 282v9M496.6 270v15M507.7 272v20M454.0 267v20M596.9 256v9M613.8 248v7M51.3 284v7M662.8 274v20M161.2 257v21M258.1 253v16M302.2 246v3M391.2 266v18M283.7 247v21M523.3 265v27M302.4 281v13"/>
<path stroke="#9040e0" stroke-width="1.4" d="M268.4 226v11M292.2 245v17M152.1 233v30M135.2 227v28M529.0 243v35M210.1 249v25"/>
<path stroke="#48c8f0" stroke-width="1.3" d="M145.2 239v8M621.2 236v12M328.4 233v14M326.8 241v12M272.3 241v14M518.7 241v7M331.1 237v13M148.4 241v17M358.7 240v11M171.6 239v10M607.3 234v10M245.4 239v3M224.7 238v11M196.6 238v12M208.7 244v19M649.7 240v5M302.3 230v7M485.8 233v10M65.0 235v12M380.2 245v13M234.8 241v7M393.0 243v4M102.1 248v3M519.5 229v3M362.0 232v8M160.2 237v13M655.3 239v13M519.1 238v13M149.2 238v9M378.0 242v5"/>
<path stroke="#40f0a0" stroke-width="1.3" d="M629.5 295v12M467.0 299v15M427.1 299v8M485.9 297v10M445.9 291v4M135.4 295v13M523.0 298v5M400.4 292v15M498.2 291v3M575.5 297v12M519.3 298v12M173.7 295v11M83.8 295v16M625.9 297v7M188.3 295v12M626.6 291v12M603.1 294v11M455.0 295v9M364.3 296v17M243.8 297v13M100.9 300v8M645.3 295v18M195.9 292v4M665.1 295v14M78.9 295v13M342.3 288v12M41.0 292v9M267.9 292v7M148.9 299v6M657.4 291v13M637.6 298v11M165.6 292v16M153.3 292v10M282.8 295v8M435.4 300v6M463.3 291v10M512.0 293v12M375.9 290v3M349.1 298v10M207.8 298v7M95.3 292v12M588.6 293v11M617.8 290v10M521.1 294v15M257.7 295v10M451.1 291v14M401.6 298v20M555.4 296v12M172.8 298v10M496.4 290v15M322.3 296v4M391.4 289v6M645.7 292v18M668.9 292v8M620.7 296v8M527.2 293v13M664.9 297v7M66.5 293v19M92.9 295v7M492.5 292v18M504.2 294v8M107.5 293v13M153.8 295v8M643.9 294v15M129.4 296v12M312.7 298v7M236.7 293v10M302.4 292v7M512.9 291v11M548.9 294v5"/>
</g></g></svg>
<div class="a" id="legend">
<svg class="a" style="left:0;top:0" width="206" height="146"><line x1="7.5" y1="0" x2="7.5" y2="146" stroke="#8c8c8c" stroke-dasharray="1 1"/><rect x="3" y="5.5" width="9" height="9.5" fill="#fff" stroke="#a4a4a4" stroke-width="1.2"/><line x1="5" y1="10.5" x2="10" y2="10.5" stroke="#222"/><line x1="12" y1="10.5" x2="18" y2="10.5" stroke="#8c8c8c" stroke-dasharray="1 1"/><path d="M19.3 7.2 Q19.3 5.2 21.5 5.2 H28.8 V6.5 H21.8 Q20.9 6.5 20.9 7.6 V9.4 H29 L31 10.4 H37.5 V11.7 H31 L29 12.7 H21.5 Q19.3 12.7 19.3 10.5 Z" fill="#0a0a0a"/><rect x="28.5" y="6.6" width="5" height="1.5" fill="#222"/><rect x="40.5" y="0" width="110.5" height="18.5" fill="#d6d2ca"/><line x1="28.5" y1="18" x2="28.5" y2="133" stroke="#8c8c8c" stroke-dasharray="1 1"/>
<line x1="29" y1="28.0" x2="40" y2="28.0" stroke="#888888" stroke-dasharray="1 1"/>
<polyline points="40.7,32.6 45.3,24.3 49.9,29.1 54.4,24.3 58.1,26.9" fill="none" stroke="#4040c0" stroke-width="1.5"/>
<line x1="29" y1="45.6" x2="40" y2="45.6" stroke="#888888" stroke-dasharray="1 1"/>
<polyline points="40.7,50.2 45.3,41.9 49.9,46.7 54.4,41.9 58.1,44.5" fill="none" stroke="#4040c0" stroke-width="1.5"/>
<line x1="29" y1="63.2" x2="40" y2="63.2" stroke="#888888" stroke-dasharray="1 1"/>
<polyline points="40.7,67.8 45.3,59.5 49.9,64.3 54.4,59.5 58.1,62.1" fill="none" stroke="#4040c0" stroke-width="1.5"/>
<line x1="29" y1="80.8" x2="40" y2="80.8" stroke="#888888" stroke-dasharray="1 1"/>
<polyline points="40.7,85.4 45.3,77.1 49.9,81.9 54.4,77.1 58.1,79.7" fill="none" stroke="#4040c0" stroke-width="1.5"/>
<line x1="29" y1="98.4" x2="40" y2="98.4" stroke="#888888" stroke-dasharray="1 1"/>
<polyline points="40.7,103.0 45.3,94.7 49.9,99.5 54.4,94.7 58.1,97.3" fill="none" stroke="#4040c0" stroke-width="1.5"/>
<line x1="29" y1="116.0" x2="40" y2="116.0" stroke="#888888" stroke-dasharray="1 1"/>
<polyline points="40.7,120.6 45.3,112.3 49.9,117.1 54.4,112.3 58.1,114.9" fill="none" stroke="#4040c0" stroke-width="1.5"/>
<line x1="29" y1="133.6" x2="40" y2="133.6" stroke="#888888" stroke-dasharray="1 1"/>
<polyline points="40.7,138.2 45.3,129.9 49.9,134.7 54.4,129.9 58.1,132.5" fill="none" stroke="#4040c0" stroke-width="1.5"/>
</svg>
<div class="a" style="left:43px;top:3px;font-size:11.5px;color:#000;white-space:nowrap;line-height:14px;-webkit-text-stroke:0.2px #000">Halle 1 - Kühlraum 2</div>
<div class="lt" style="top:21.2px;color:#e040d8">K:1 [°C] R-H1-Kühlr.2-F1</div>
<div class="lt" style="top:38.8px;color:#207a3a">K:2 [°C] R-H1-Kühlr.2-F2</div>
<div class="lt" style="top:56.4px;color:#50d8a0">K:3 [°C] R-H1-Kühlr.2-F4</div>
<div class="lt" style="top:74.0px;color:#e87c40">K:4 [°C] R-H1-Kühlr.2-F3</div>
<div class="lt" style="top:91.6px;color:#40b4e4">K:5 [°C] R-H1-Kühlr.2-F5</div>
<div class="lt" style="top:109.2px;color:#2424b4">K:6 [°C] R-H1-Kühlr.2-F6</div>
<div class="lt" style="top:126.8px;color:#e02c2c">K:7 [°C] R-H1-Kühlr.2-F7</div>
</div>
</div></body></html>
